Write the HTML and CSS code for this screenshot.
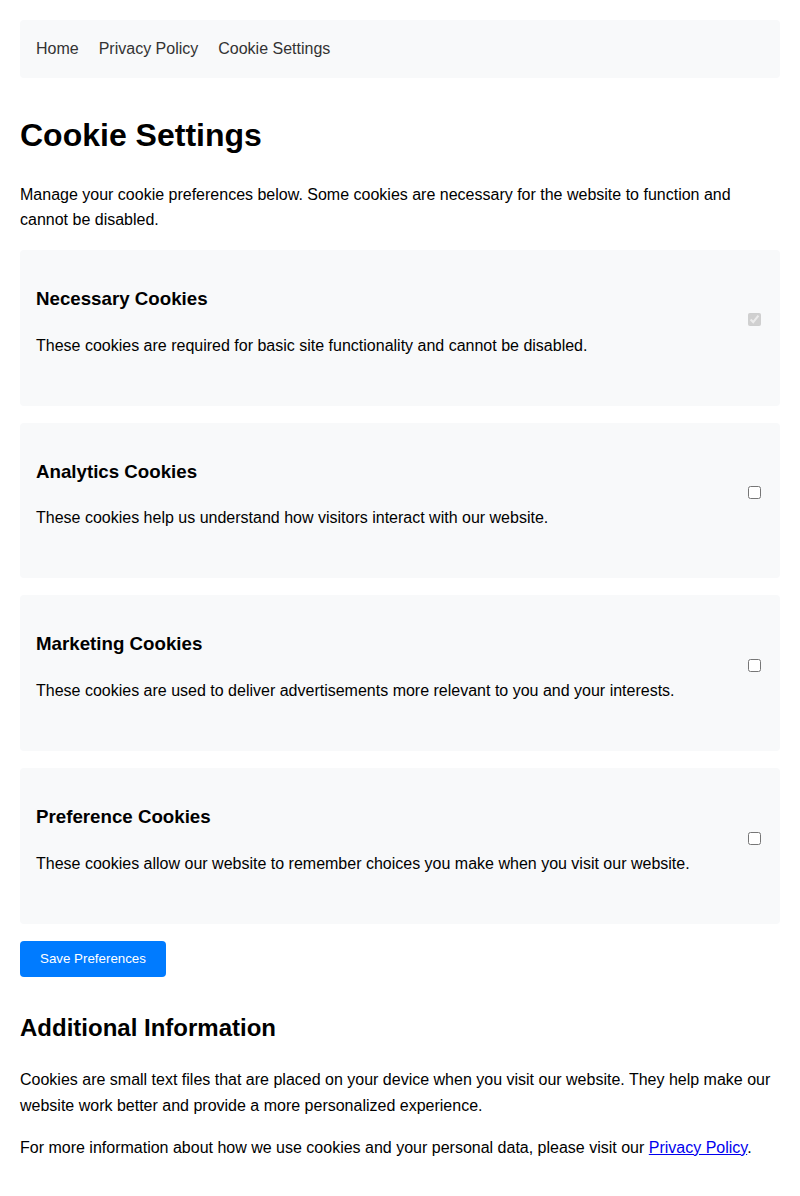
FILE: index.html
```html
<!DOCTYPE html>
<html lang="en">
<head>
<meta charset="utf-8">
<title>Cookie Settings</title>
<link rel="stylesheet" href="styles.css">
</head>
<body>
<nav class="nav">
  <a class="nav-link" href="#">Home</a>
  <a class="nav-link" href="#">Privacy Policy</a>
  <a class="nav-link" href="#">Cookie Settings</a>
</nav>
<main>
  <h1 class="title">Cookie Settings</h1>
  <p class="text intro">Manage your cookie preferences below. Some cookies are necessary for the website to function and cannot be disabled.</p>

  <div class="card">
    <div class="card-info">
      <h3 class="card-title">Necessary Cookies</h3>
      <p class="card-text">These cookies are required for basic site functionality and cannot be disabled.</p>
    </div>
    <input class="check" type="checkbox" checked disabled>
  </div>

  <div class="card">
    <div class="card-info">
      <h3 class="card-title">Analytics Cookies</h3>
      <p class="card-text">These cookies help us understand how visitors interact with our website.</p>
    </div>
    <input class="check" type="checkbox">
  </div>

  <div class="card">
    <div class="card-info">
      <h3 class="card-title">Marketing Cookies</h3>
      <p class="card-text">These cookies are used to deliver advertisements more relevant to you and your interests.</p>
    </div>
    <input class="check" type="checkbox">
  </div>

  <div class="card">
    <div class="card-info">
      <h3 class="card-title">Preference Cookies</h3>
      <p class="card-text">These cookies allow our website to remember choices you make when you visit our website.</p>
    </div>
    <input class="check" type="checkbox">
  </div>

  <button class="btn" type="button">Save Preferences</button>

  <h2 class="subtitle">Additional Information</h2>
  <p class="text">Cookies are small text files that are placed on your device when you visit our website. They help make our website work better and provide a more personalized experience.</p>
  <p class="text">For more information about how we use cookies and your personal data, please visit our <a class="link" href="#">Privacy Policy</a>.</p>
</main>
</body>
</html>
```

FILE: styles.css
```css
html, body {
  background: #fff;
}
body {
  margin: 0;
  padding: 20px;
  font-family: "Liberation Sans", Arial, Helvetica, sans-serif;
  font-size: 16px;
  line-height: 1.6;
  color: #000;
}
.nav {
  display: flex;
  gap: 20px;
  background: #f8f9fa;
  padding: 16px;
  border-radius: 4px;
  margin-bottom: 32px;
}
.nav-link {
  color: #333;
  text-decoration: none;
}
.title {
  font-size: 32px;
  font-weight: bold;
  margin: 0 0 21px;
}
.text {
  margin: 0 0 16px;
}
.intro {
  margin-bottom: 17px;
}
.card {
  display: flex;
  align-items: center;
  justify-content: space-between;
  background: #f8f9fa;
  border-radius: 4px;
  padding: 16px;
  margin-bottom: 17px;
}
.card-info {
  flex: 1;
}
.card-title {
  font-size: 18.72px;
  font-weight: bold;
  margin: 18px 0 18.72px;
}
.card-text {
  margin: 0 0 31.5px;
}
.check {
  width: 13px;
  height: 13px;
  margin: 3px 3px 19px 4px;
}
.btn {
  display: block;
  background: #007bff;
  color: #fff;
  border: none;
  border-radius: 4px;
  padding: 10px 20px;
  font-family: "Liberation Sans", Arial, Helvetica, sans-serif;
  font-size: 13.333px;
  line-height: 16px;
  cursor: pointer;
}
.subtitle {
  font-size: 24px;
  font-weight: bold;
  margin: 32px 0 20px;
}
.link {
  color: #0000ee;
  text-decoration: underline;
}
```
